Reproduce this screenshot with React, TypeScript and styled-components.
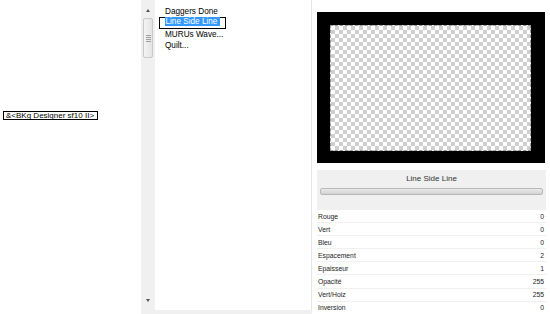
import React from 'react'
import styled, { createGlobalStyle } from 'styled-components'

const GLOBAL = createGlobalStyle`
    html, body {
        margin: 0;
        padding: 0;
        background: #ffffff;
        font-family: "Liberation Sans", Arial, sans-serif;
    }
`

const PAGE = styled.div`
    width: 550px;
    height: 314px;
    display: flex;
    overflow: hidden;
    background: #ffffff;
`

const LEFT_AREA = styled.div`
    width: 141px;
    padding-top: 111px;
    padding-left: 3px;
    box-sizing: border-box;
    display: flex;
    align-items: flex-start;
`

const NAME_TAG = styled.div`
    border: 1px solid #000;
    font-size: 8px;
    line-height: 7px;
    padding: 0 3px 0 2px;
    color: #000;
    white-space: nowrap;
`

const MIDDLE = styled.div`
    display: flex;
    flex-direction: column;
    width: 171px;
`

const MIDDLE_MAIN = styled.div`
    display: flex;
    flex: 1;
`

const BOTTOM_STRIP = styled.div`
    height: 4px;
    background: #f0f0f0;
`

const SCROLLBAR = styled.div`
    width: 14px;
    background: #f0f0f0;
    display: flex;
    flex-direction: column;
    align-items: center;
`

const ARROW = styled.div<{ down?: boolean }>`
    width: 0;
    height: 0;
    border-left: 2.5px solid transparent;
    border-right: 2.5px solid transparent;
    ${p => p.down
        ? 'border-top: 3px solid #555; margin-top: auto; margin-bottom: 8px;'
        : 'border-bottom: 3px solid #555; margin-top: 9px;'}
`

const THUMB = styled.div`
    margin-top: 6px;
    width: 10px;
    height: 40px;
    box-sizing: border-box;
    border: 1px solid #c9c9c9;
    border-radius: 2px;
    background: linear-gradient(to right, #f4f4f4, #e4e4e4);
    display: flex;
    flex-direction: column;
    align-items: center;
    justify-content: center;
    gap: 1px;
`

const GRIP = styled.div`
    width: 5px;
    height: 1px;
    background: #a0a0a0;
`

const LIST = styled.div`
    flex: 1;
    padding-top: 6px;
    padding-left: 4px;
    border-right: 1px solid #e6e6e6;
`

const ITEM = styled.div<{ selected?: boolean }>`
    font-size: 8.2px;
    line-height: 11.3px;
    height: 11.3px;
    color: #000;
    padding-left: 6px;
    white-space: nowrap;
    ${p => p.selected && `
        width: 67px;
        box-sizing: border-box;
        border: 1.5px solid #000;
        padding-left: 4.5px;
        line-height: 8.5px;
    `}
`

const SELECTED_TEXT = styled.span`
    background: #3399ff;
    color: #fff;
    padding: 0 3px 0 1px;
`

const RIGHT = styled.div`
    flex: 1;
    display: flex;
    flex-direction: column;
    padding: 0 4px 0 5px;
`

const PREVIEW = styled.div`
    margin-top: 12px;
    height: 151px;
    flex-shrink: 0;
    margin-right: 1px;
    background: #000;
    padding: 13px 14px 12px 13px;
    box-sizing: border-box;
`

const CHECKER = styled.div`
    width: 100%;
    height: 100%;
    box-sizing: border-box;
    border: 1.5px dashed #9a9a9a;
    background-color: #ffffff;
    background-image: repeating-conic-gradient(#cfcfcf 0% 25%, #ffffff 0% 50%);
    background-size: 8px 8px;
`

const CONTROL_BOX = styled.div`
    margin-top: 7px;
    background: #f0f0f0;
    padding: 0 3px;
    height: 40px;
    flex-shrink: 0;
    display: flex;
    flex-direction: column;
`

const TITLE = styled.div`
    text-align: center;
    font-size: 8px;
    line-height: 18px;
    color: #333;
`

const SLIDER = styled.div`
    height: 7px;
    box-sizing: border-box;
    border: 1px solid #b8b8b8;
    border-radius: 2px;
    background: linear-gradient(to bottom, #eaeaea, #d2d2d2);
`

const TABLE = styled.div`
    display: flex;
    flex-direction: column;
    background: #f0f0f0;
    gap: 1px;
    padding-bottom: 1px;
`

const ROW = styled.div`
    height: 12.1px;
    flex-shrink: 0;
    background: #fff;
    display: flex;
    align-items: center;
    justify-content: space-between;
    padding: 0 2px 0 1px;
    font-size: 6.8px;
    color: #222;
`

const ROWS: [string, number][] = [
    ['Rouge', 0],
    ['Vert', 0],
    ['Bleu', 0],
    ['Espacement', 2],
    ['Epaisseur', 1],
    ['Opacité', 255],
    ['Vert/Hoiz', 255],
    ['Inversion', 0],
]

const App = () => {
    return (
        <>
            <GLOBAL />
            <PAGE>
                <LEFT_AREA>
                    <NAME_TAG>&amp;&lt;BKg Designer sf10 II&gt;</NAME_TAG>
                </LEFT_AREA>

                <MIDDLE>
                    <MIDDLE_MAIN>
                        <SCROLLBAR>
                            <ARROW />
                            <THUMB>
                                <GRIP /><GRIP /><GRIP /><GRIP />
                            </THUMB>
                            <ARROW down />
                        </SCROLLBAR>
                        <LIST>
                            <ITEM>Daggers Done</ITEM>
                            <ITEM selected><SELECTED_TEXT>Line Side Line</SELECTED_TEXT></ITEM>
                            <ITEM>MURUs Wave...</ITEM>
                            <ITEM>Quilt...</ITEM>
                        </LIST>
                    </MIDDLE_MAIN>
                    <BOTTOM_STRIP />
                </MIDDLE>

                <RIGHT>
                    <PREVIEW>
                        <CHECKER />
                    </PREVIEW>
                    <CONTROL_BOX>
                        <TITLE>Line Side Line</TITLE>
                        <SLIDER />
                    </CONTROL_BOX>
                    <TABLE>
                        {ROWS.map(([name, value]) => (
                            <ROW key={name}>
                                <span>{name}</span>
                                <span>{value}</span>
                            </ROW>
                        ))}
                    </TABLE>
                </RIGHT>
            </PAGE>
        </>
    )
}

export default App
